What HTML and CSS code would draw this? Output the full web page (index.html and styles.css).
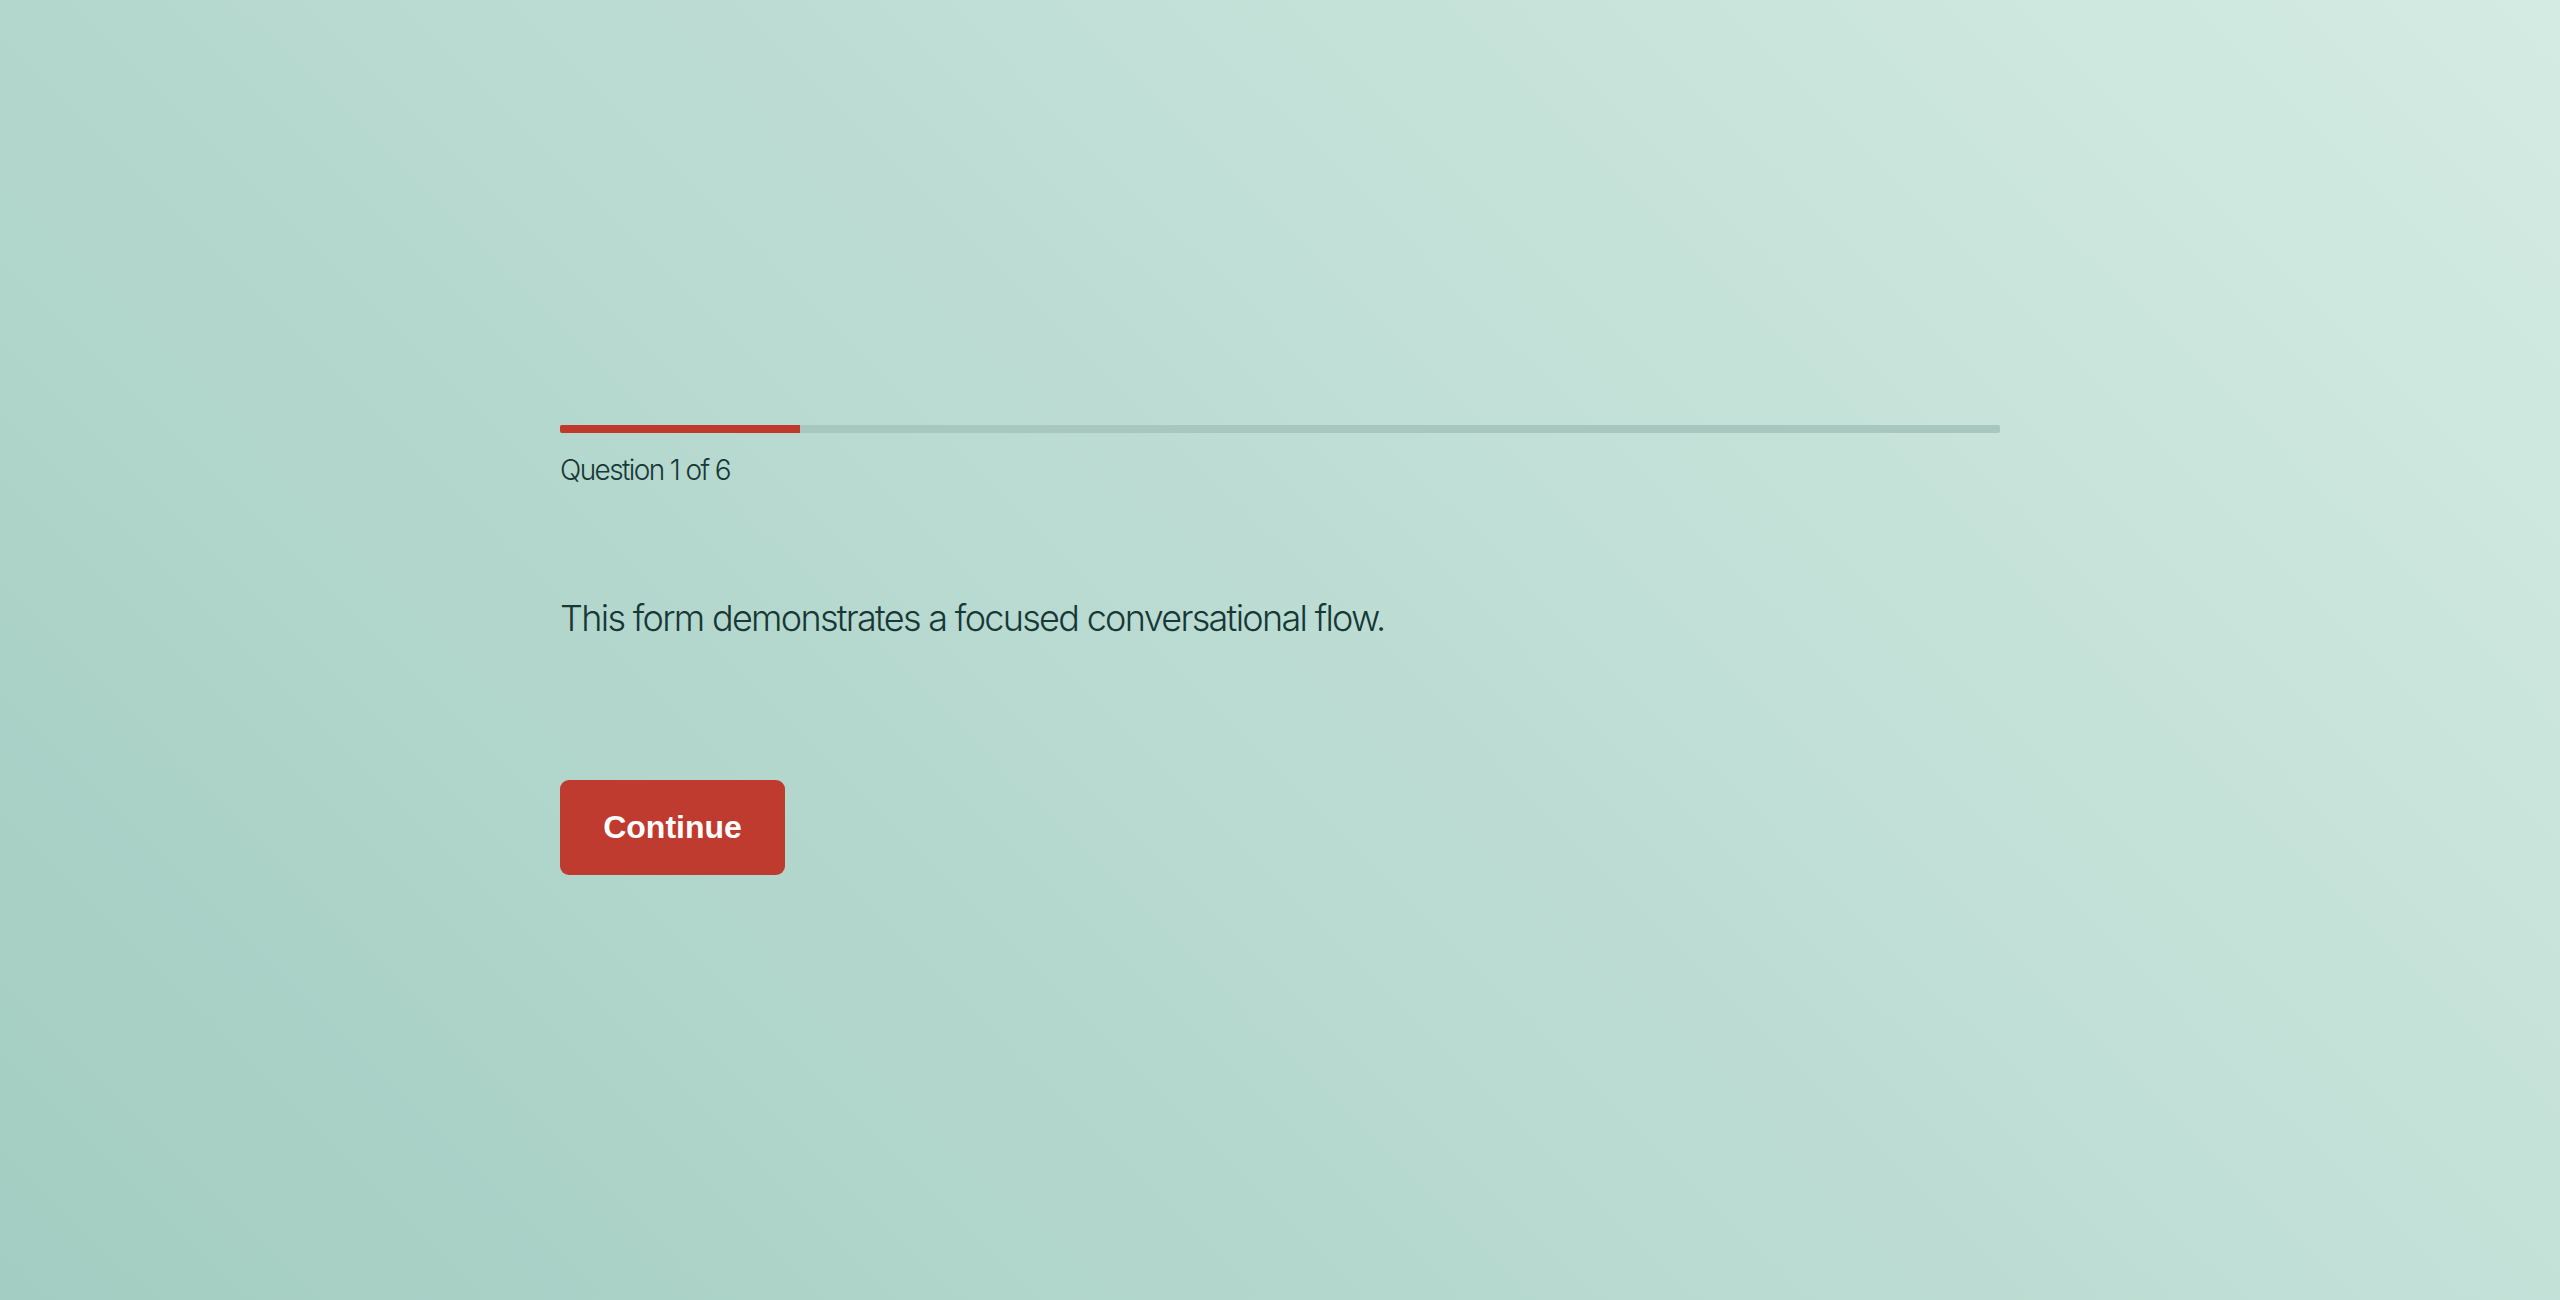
FILE: index.html
```html
<!DOCTYPE html>
<html lang="en">
<head>
<meta charset="utf-8">
<title>Conversational form</title>
<link rel="stylesheet" href="styles.css">
</head>
<body>
<main class="form">
  <div class="progress"><div class="progress-fill" style="width: 16.6667%"></div></div>
  <p class="step-label">Question 1 of 6</p>
  <h1 class="question">This form demonstrates a focused conversational flow.</h1>
  <button class="continue" type="button">Continue</button>
</main>
</body>
</html>
```
FILE: styles.css
```css
html, body {
  margin: 0;
  padding: 0;
}
body {
  min-height: 100vh;
  display: flex;
  align-items: center;
  justify-content: center;
  background: linear-gradient(45deg, #a3cdc2 0%, #d4ebe3 100%);
  font-family: Inter, "Noto Sans", sans-serif;
  color: #173836;
}
.form {
  width: 1440px;
  display: flex;
  flex-direction: column;
  align-items: flex-start;
}
.progress {
  width: 100%;
  height: 8px;
  background: #a8c7be;
  border-radius: 2px;
  overflow: hidden;
}
.progress-fill {
  height: 100%;
  background: #c0392b;
}
.step-label {
  margin: 17px 0 0;
  font-size: 28px;
  line-height: 40px;
  font-weight: 300;
  letter-spacing: -1.6px;
}
.question {
  margin: 104px 0 0;
  font-size: 36px;
  line-height: 48px;
  font-weight: 300;
  letter-spacing: -1.7px;
}
.continue {
  margin-top: 138px;
  width: 225px;
  height: 95px;
  padding: 0;
  border: none;
  border-radius: 9px;
  background: #bf3a2f;
  color: #ffffff;
  font-family: "Liberation Sans", Arial, sans-serif;
  font-weight: 700;
  font-size: 32px;
  line-height: 37px;
  cursor: pointer;
}
```
